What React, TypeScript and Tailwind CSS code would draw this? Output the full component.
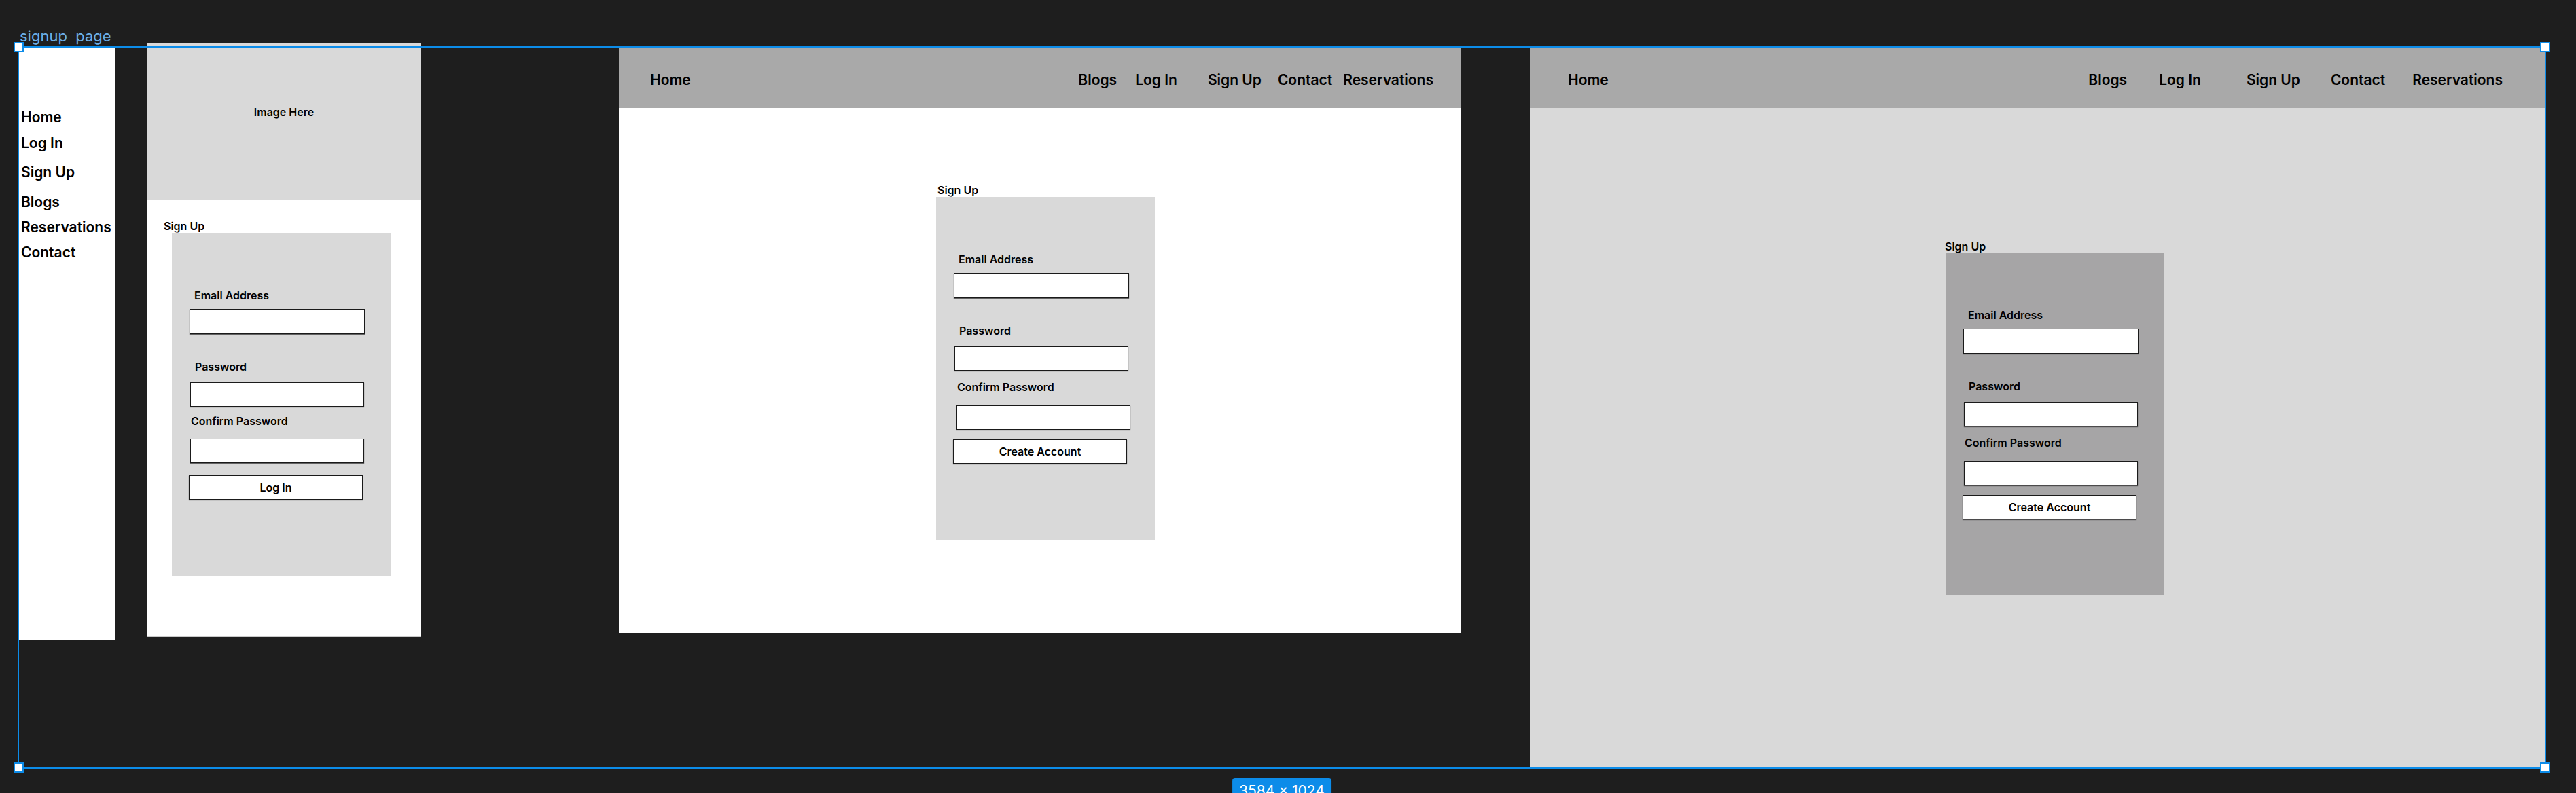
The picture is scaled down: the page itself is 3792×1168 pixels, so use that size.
import React from 'react';

// wireframe pieces shared by the mobile and desktop signup frames
const FieldLabel: React.FC<{ className: string; children: React.ReactNode }> = ({ className, children }) => (
  <span className={`block text-[16px] leading-[20px] font-semibold text-black ${className}`}>{children}</span>
);

const Input: React.FC<{ className: string }> = ({ className }) => (
  <div className={`bg-white border border-[#1a1a1a] shadow-[0_1px_1px_rgba(0,0,0,0.55)] ${className}`} />
);

type FormProps = {
  boxClass: string;
  confirmClass: string;
  input3Class: string;
  buttonClass: string;
  action: string;
};

const SignUpForm: React.FC<FormProps> = ({ boxClass, confirmClass, input3Class, buttonClass, action }) => (
  <div className={`w-[322px] h-[505px] flex flex-col items-start pt-[82px] ${boxClass}`}>
    <FieldLabel className="ml-[33px]">Email Address</FieldLabel>
    <Input className="mt-[10px] ml-[26px] w-[258px] h-[37px]" />
    <FieldLabel className="mt-[38px] ml-[34px]">Password</FieldLabel>
    <Input className="mt-[13px] ml-[27px] w-[256px] h-[36px]" />
    <FieldLabel className={confirmClass}>Confirm Password</FieldLabel>
    <Input className={input3Class} />
    <button
      className={`ml-[25px] w-[256px] h-[36px] bg-white border border-[#1a1a1a] shadow-[0_1px_1px_rgba(0,0,0,0.55)] text-[16px] font-semibold text-black flex items-center justify-center ${buttonClass}`}
    >
      {action}
    </button>
  </div>
);

const navText = 'text-[21px] leading-[27px] font-semibold text-black whitespace-nowrap';

const App: React.FC = () => {
  const sideItems: [string, string][] = [
    ['Home', 'mt-[89px]'],
    ['Log In', 'mt-[11px]'],
    ['Sign Up', 'mt-[16px]'],
    ['Blogs', 'mt-[17px]'],
    ['Reservations', 'mt-[10px]'],
    ['Contact', 'mt-[10px]'],
  ];

  return (
    <div className="w-[3792px] h-[1168px] bg-[#1e1e1e] overflow-hidden pt-[40px] font-['Inter','Noto_Sans',sans-serif]">
      {/* frame name */}
      <div className="ml-[29px] h-[27px] leading-[27px] text-[22px] text-[#6cb0e8] whitespace-pre">signup  page</div>

      {/* selected frame */}
      <div className="relative ml-[26px] mt-[1px] w-[3722px] h-[1064px]">
        <div className="flex items-start p-[2px] h-full">
          {/* mobile sidebar nav */}
          <div className="w-[142px] h-[873px] bg-white pl-[3px] flex flex-col">
            {sideItems.map(([label, mt]) => (
              <span key={label} className={`${navText} ${mt}`}>{label}</span>
            ))}
          </div>

          {/* mobile signup card */}
          <div className="ml-[46px] -mt-[7px] w-[404px] h-[875px] bg-white border border-[#c9c9c9] flex flex-col">
            <div className="h-[231px] bg-[#d9d9d9] flex justify-center pt-[91px]">
              <span className="text-[16px] leading-[20px] font-semibold text-black">Image Here</span>
            </div>
            <div className="pl-[24px] pt-[28px] flex flex-col items-start">
              <span className="text-[16px] leading-[20px] font-semibold text-black">Sign Up</span>
              <div className="ml-[12px]">
                <SignUpForm
                  boxClass="bg-[#d9d9d9]"
                  confirmClass="mt-[11px] ml-[28px]"
                  input3Class="mt-[16px] ml-[27px] w-[256px] h-[36px]"
                  buttonClass="mt-[18px]"
                  action="Log In"
                />
              </div>
            </div>
          </div>

          {/* desktop light */}
          <div className="ml-[291px] w-[1239px] h-[863px] bg-white flex flex-col">
            <div className="h-[89px] bg-[#a9a9a9] flex items-start pt-[34px] pl-[46px] pr-[40px]">
              <span className={navText}>Home</span>
              <div className="ml-auto flex">
                <span className={navText}>Blogs</span>
                <span className={`${navText} ml-[27px]`}>Log In</span>
                <span className={`${navText} ml-[45px]`}>Sign Up</span>
                <span className={`${navText} ml-[24px]`}>Contact</span>
                <span className={`${navText} ml-[16px]`}>Reservations</span>
              </div>
            </div>
            <div className="ml-[467px] mt-[111px] flex flex-col items-start">
              <span className="ml-[2px] text-[16px] leading-[20px] font-semibold text-black">Sign Up</span>
              <SignUpForm
                boxClass="bg-[#d9d9d9]"
                confirmClass="mt-[14px] ml-[31px]"
                input3Class="mt-[17px] ml-[30px] w-[256px] h-[36px]"
                buttonClass="mt-[14px]"
                action="Create Account"
              />
            </div>
          </div>

          {/* desktop grey */}
          <div className="ml-[102px] w-[1494px] h-full bg-[#d9d9d9] flex flex-col">
            <div className="h-[89px] bg-[#a9a9a9] flex items-start pt-[34px] pl-[56px] pr-[62px]">
              <span className={navText}>Home</span>
              <div className="ml-auto flex">
                <span className={navText}>Blogs</span>
                <span className={`${navText} ml-[47px]`}>Log In</span>
                <span className={`${navText} ml-[67px]`}>Sign Up</span>
                <span className={`${navText} ml-[45px]`}>Contact</span>
                <span className={`${navText} ml-[40px]`}>Reservations</span>
              </div>
            </div>
            <div className="ml-[611px] mt-[194px] flex flex-col items-start">
              <span className="text-[16px] leading-[20px] font-semibold text-black">Sign Up</span>
              <SignUpForm
                boxClass="ml-[1px] -mt-[1px] bg-[#a6a5a6]"
                confirmClass="mt-[14px] ml-[28px]"
                input3Class="mt-[17px] ml-[27px] w-[256px] h-[36px]"
                buttonClass="mt-[14px]"
                action="Create Account"
              />
            </div>
          </div>
        </div>

        {/* selection outline + handles */}
        <div className="absolute inset-0 border-2 border-[#0c8ce9] pointer-events-none" />
        <div className="absolute -left-[6px] -top-[6px] w-[15px] h-[15px] bg-white border-2 border-[#0c8ce9]" />
        <div className="absolute -right-[6px] -top-[6px] w-[15px] h-[15px] bg-white border-2 border-[#0c8ce9]" />
        <div className="absolute -left-[6px] -bottom-[6px] w-[15px] h-[15px] bg-white border-2 border-[#0c8ce9]" />
        <div className="absolute -right-[6px] -bottom-[6px] w-[15px] h-[15px] bg-white border-2 border-[#0c8ce9]" />

        {/* size badge */}
        <div className="absolute left-1/2 -translate-x-1/2 top-full mt-[14px] bg-[#0c8ce9] rounded-[4px] px-[10px] pt-[6px] pb-[4px] text-[21px] leading-[26px] text-white whitespace-nowrap">
          3584 × 1024
        </div>
      </div>
    </div>
  );
};

export default App;
